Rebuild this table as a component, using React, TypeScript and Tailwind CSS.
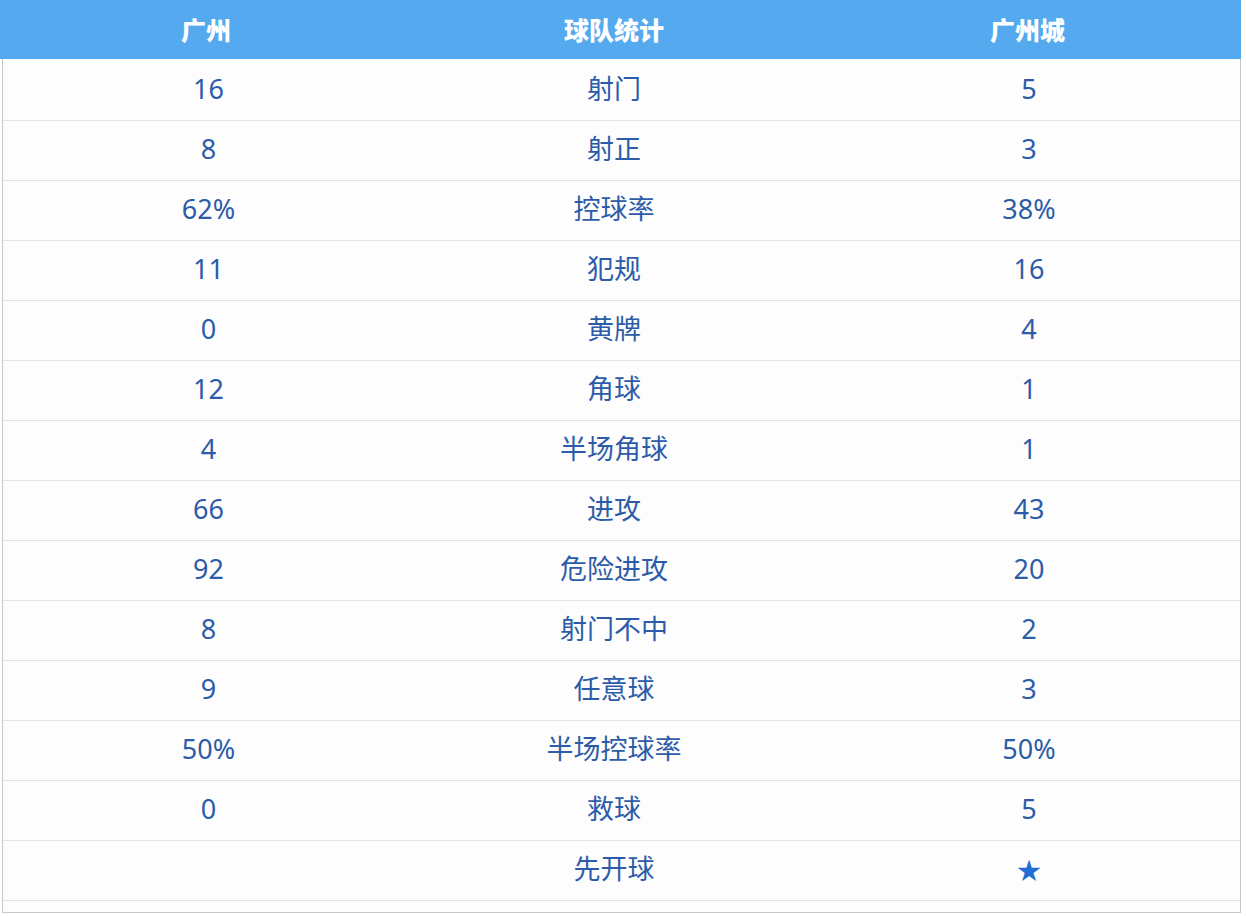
import React from "react";

const rows: [string, string, string][] = [
  ["16", "射门", "5"],
  ["8", "射正", "3"],
  ["62%", "控球率", "38%"],
  ["11", "犯规", "16"],
  ["0", "黄牌", "4"],
  ["12", "角球", "1"],
  ["4", "半场角球", "1"],
  ["66", "进攻", "43"],
  ["92", "危险进攻", "20"],
  ["8", "射门不中", "2"],
  ["9", "任意球", "3"],
  ["50%", "半场控球率", "50%"],
  ["0", "救球", "5"],
  ["", "先开球", "★"],
];

export default function App() {
  return (
    <div
      className="w-[1246px] h-[916px] bg-white"
      style={{ fontFamily: '"Noto Sans", "Noto Sans CJK SC", sans-serif' }}
    >
      <div className="w-[1241px]">
        <div
          className="flex h-[59px] items-center bg-[#55aaef] text-white font-black text-[25px]"
          style={{ fontFamily: '"Noto Sans CJK SC", sans-serif' }}
        >
          <div className="w-[414px] text-center pr-[2px]">广州</div>
          <div className="w-[400px] text-center">球队统计</div>
          <div className="flex-1 text-center">广州城</div>
        </div>
        <div className="ml-[2px] border-l border-r border-b border-[#c8c8c8] bg-[#fdfdfe] pt-[2px] pb-[11px]">
          {rows.map((r, i) => (
            <div
              key={i}
              className="flex h-[60px] items-center pb-[3px] border-b border-[#e3e4e6] text-[27px] text-[#2c5ca8]"
            >
              <div className="w-[411px] text-center">{r[0]}</div>
              <div className="w-[400px] text-center">{r[1]}</div>
              <div className="flex-1 text-center pl-[4px]">
                {r[2] === "★" ? <span className="text-[#1f6fd4] text-[24px]">★</span> : r[2]}
              </div>
            </div>
          ))}
        </div>
      </div>
    </div>
  );
}
